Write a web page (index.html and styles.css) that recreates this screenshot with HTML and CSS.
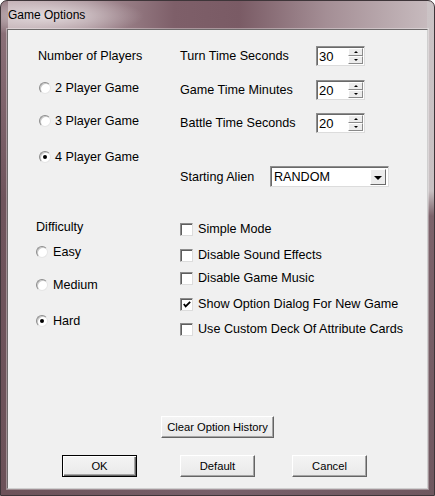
FILE: index.html
```html
<!DOCTYPE html>
<html>
<head>
<meta charset="utf-8">
<title>Game Options</title>
<link rel="stylesheet" href="styles.css">
</head>
<body>
<div class="window">
  <div class="titlebar">Game Options</div>
  <div class="client">
    <div class="top">
      <div class="players">
        <div class="row label-row">Number of Players</div>
        <div class="row opt"><span class="radio"></span><span>2 Player Game</span></div>
        <div class="row opt"><span class="radio"></span><span>3 Player Game</span></div>
        <div class="row opt"><span class="radio checked"></span><span>4 Player Game</span></div>
      </div>
      <div class="timers">
        <div class="trow"><span class="tlabel">Turn Time Seconds</span>
          <div class="spin"><span class="spin-val">30</span><span class="spin-btns"><span class="sb up"></span><span class="sb down"></span></span></div></div>
        <div class="trow"><span class="tlabel">Game Time Minutes</span>
          <div class="spin"><span class="spin-val">20</span><span class="spin-btns"><span class="sb up"></span><span class="sb down"></span></span></div></div>
        <div class="trow"><span class="tlabel">Battle Time Seconds</span>
          <div class="spin"><span class="spin-val">20</span><span class="spin-btns"><span class="sb up"></span><span class="sb down"></span></span></div></div>
        <div class="trow"><span class="alabel">Starting Alien</span>
          <div class="combo"><span class="combo-val">RANDOM</span><span class="combo-btn"><span class="arrow"></span></span></div></div>
      </div>
    </div>
    <div class="bottom">
      <div class="difficulty">
        <div class="row">Difficulty</div>
        <div class="row opt2"><span class="radio"></span><span>Easy</span></div>
        <div class="row opt2"><span class="radio"></span><span>Medium</span></div>
        <div class="row opt2"><span class="radio checked"></span><span>Hard</span></div>
      </div>
      <div class="checks">
        <div class="row chk"><span class="cbox"></span><span>Simple Mode</span></div>
        <div class="row chk"><span class="cbox"></span><span>Disable Sound Effects</span></div>
        <div class="row chk"><span class="cbox"></span><span>Disable Game Music</span></div>
        <div class="row chk"><span class="cbox"><svg width="11" height="11" viewBox="0 0 11 11"><path d="M2 5 L4 7.5 L9 2.5" fill="none" stroke="#000" stroke-width="2"/></svg></span><span>Show Option Dialog For New Game</span></div>
        <div class="row chk"><span class="cbox"></span><span>Use Custom Deck Of Attribute Cards</span></div>
      </div>
    </div>
    <div class="clear-row"><button class="btn clear">Clear Option History</button></div>
    <div class="btn-row">
      <button class="btn ok">OK</button>
      <button class="btn def">Default</button>
      <button class="btn cancel">Cancel</button>
    </div>
  </div>
</div>
</body>
</html>
```
FILE: styles.css
```css
* { box-sizing: border-box; }
html, body { margin: 0; padding: 0; }
body {
  width: 435px;
  height: 496px;
  font-family: "Liberation Sans", Arial, sans-serif;
  font-size: 12.6px;
  color: #000;
}
.window {
  width: 435px;
  height: 496px;
  border: 1px solid #3e3539;
  border-radius: 7px 7px 0 0;
  padding: 0 6px 6px 6px;
  display: flex;
  flex-direction: column;
  background:
    radial-gradient(ellipse 95px 20px at 48px 15px, rgba(255,255,255,0.6), rgba(255,255,255,0)),
    linear-gradient(#cbc3c5 0, #c8c0c2 190px, #7c626a 215px, #6f575f 100%) right top / 7px 100% no-repeat,
    linear-gradient(#8f747c 0, #6f545c 40%, #6c5259 100%) left top / 7px 100% no-repeat,
    linear-gradient(90deg, #6c5259, #77606a 50%, #6f575f) left bottom / 100% 7px no-repeat,
    linear-gradient(90deg, #c2afb4 0%, #ab949b 20%, #7e5f69 40%, #7a5b65 55%, #a48e95 75%, #c9bdc0 100%);
}
.titlebar {
  height: 28px;
  line-height: 28px;
  padding-left: 1px;
  font-size: 12px;
  color: #000;
}
.client {
  flex: 1;
  background: #f0f0f0;
  border: 1px solid;
  border-color: #6e6a6b #cfcfcf #cfcfcf #6e6a6b;
  box-shadow: 0 0 0 1px rgba(255,255,255,0.35);
  padding-top: 16px;
  display: flex;
  flex-direction: column;
}
.row {
  height: 20px;
  display: flex;
  align-items: center;
  white-space: nowrap;
}
.top { display: flex; }
.players {
  width: 172px;
  padding-left: 30px;
  display: grid;
  grid-template-rows: 32px 33px 36px 20px;
  align-items: start;
}
.opt { margin-left: 1px; gap: 4px; }
.timers {
  display: grid;
  grid-template-rows: 34px 33px 53px 21px;
  align-items: start;
}
.trow { display: flex; align-items: center; white-space: nowrap; }
.tlabel { width: 136px; }
.alabel { width: 90px; }
.spin {
  display: flex;
  width: 49px;
  height: 20px;
  background: #fff;
  border: 1px solid;
  border-color: #8e8e8e #dcdcdc #dcdcdc #8e8e8e;
  box-shadow: inset 1px 1px 0 #696969;
}
.spin-val { flex: 1; padding-left: 2px; line-height: 19px; font-size: 13px; }
.spin-btns {
  width: 16px;
  display: flex;
  flex-direction: column;
  padding: 1px 1px 1px 0;
}
.sb {
  flex: 1;
  background: #ececec;
  border: 1px solid;
  border-color: #fff #8a8a8a #8a8a8a #fff;
  display: flex;
  align-items: center;
  justify-content: center;
}
.sb::after {
  content: "";
  width: 0; height: 0;
  border-left: 2px solid transparent;
  border-right: 2px solid transparent;
}
.up::after { border-bottom: 2px solid #000; }
.down::after { border-top: 2px solid #000; }
.combo {
  display: flex;
  width: 119px;
  height: 21px;
  background: #fff;
  border: 1px solid;
  border-color: #8e8e8e #dcdcdc #dcdcdc #8e8e8e;
  box-shadow: inset 1px 1px 0 #696969;
  padding: 2px 2px 1px 0;
}
.combo-val { flex: 1; padding-left: 3px; line-height: 17px; }
.combo-btn {
  width: 16px;
  background: #ececec;
  border: 1px solid;
  border-color: #fff #6a6a6a #6a6a6a #fff;
  display: flex;
  align-items: center;
  justify-content: center;
}
.arrow {
  width: 0; height: 0;
  border-left: 4px solid transparent;
  border-right: 4px solid transparent;
  border-top: 4px solid #000;
  margin-top: 1px;
}
.radio {
  width: 12px;
  height: 12px;
  flex: none;
  border-radius: 50%;
  border: 1px solid;
  border-color: #8d8d8d #e6e6e6 #e6e6e6 #8d8d8d;
  background: radial-gradient(circle at 60% 60%, #ffffff 55%, #f2f2f2);
  box-shadow: inset 1px 1px 0 #c8c8c8;
  display: flex;
  align-items: center;
  justify-content: center;
}
.radio.checked::after {
  content: "";
  width: 4px;
  height: 4px;
  border-radius: 50%;
  background: #000;
}
.bottom {
  display: flex;
  margin-top: 30px;
  align-items: flex-start;
}
.difficulty {
  width: 172px;
  padding-left: 28px;
  display: grid;
  grid-template-rows: 25px 33px 36px 20px;
  align-items: start;
}
.opt2 { gap: 5px; }
.checks {
  padding-top: 2px;
  display: grid;
  grid-template-rows: 26px 23px 26px 25px 20px;
  align-items: start;
}
.chk { gap: 5px; }
.cbox {
  width: 13px;
  height: 13px;
  flex: none;
  background: #fff;
  border: 1px solid;
  border-color: #8c8c8c #dcdcdc #dcdcdc #8c8c8c;
  box-shadow: inset 1px 1px 0 #5e5e5e;
  display: flex;
  align-items: center;
  justify-content: center;
  padding: 1px 0 0 1px;
}
.cbox svg { display: block; }
.clear-row {
  margin-top: 77px;
  display: flex;
  justify-content: center;
}
.btn {
  height: 22px;
  margin: 0;
  padding: 0;
  white-space: nowrap;
  font-family: "Liberation Sans", Arial, sans-serif;
  font-size: 11.2px;
  color: #000;
  background: linear-gradient(#f4f4f4, #e9e9e9);
  border: 1px solid;
  border-color: #ffffff #646464 #646464 #ffffff;
  box-shadow: inset -1px -1px 0 #a5a5a5;
  border-radius: 0;
}
.clear { width: 113px; }
.btn-row {
  margin-top: 17px;
  display: flex;
  padding-left: 54px;
}
.ok, .def, .cancel { width: 75px; }
.ok {
  border: 1px solid #000;
  box-shadow: inset 1px 1px 0 #fff, inset -1px -1px 0 #646464, inset -2px -2px 0 #a5a5a5;
}
.def { margin-left: 43px; }
.cancel { margin-left: 37px; }
```
